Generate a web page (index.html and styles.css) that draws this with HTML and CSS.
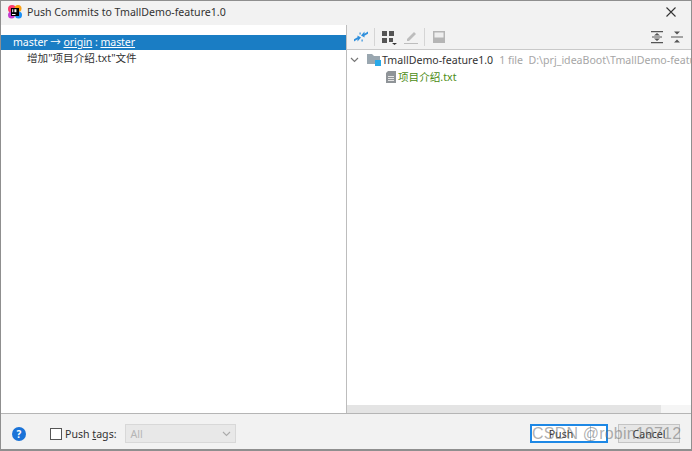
FILE: index.html
```html
<!DOCTYPE html>
<html lang="en">
<head>
  <meta charset="UTF-8" />
  <title>Push Commits to TmallDemo-feature1.0</title>
  <link rel="stylesheet" href="styles.css">
</head>
<body>
  <div class="dialog">
    <header class="titlebar">
      <svg class="app-icon" width="14" height="14" viewBox="0 0 14 14">
        <circle cx="4" cy="4" r="4" fill="#fc3a6c"/>
        <circle cx="10" cy="3.500" r="3.500" fill="#f9a012"/>
        <circle cx="3.500" cy="10" r="3.500" fill="#c33ad0"/>
        <circle cx="10.500" cy="10" r="3.500" fill="#1a90f5"/>
        <rect x="3" y="3" width="8" height="8" fill="#000"/>
        <rect x="4" y="9" width="3.500" height="1" fill="#fff"/>
        <rect x="4.200" y="4.200" width="1" height="3" fill="#fff"/>
        <rect x="6.400" y="4.200" width="2" height="3" fill="#fff"/>
      </svg>
      <span class="title">Push Commits to TmallDemo-feature1.0</span>
      <svg class="close" width="10" height="10" viewBox="0 0 10 10">
        <path d="M.5.500l9 9M9.500.500l-9 9" stroke="#333" stroke-width="1.100" fill="none"/>
      </svg>
    </header>

    <div class="panes">
      <section class="commits">
        <div class="branch-row">master → <u>origin</u> : <u>master</u></div>
        <div class="commit-row">增加"项目介绍.txt"文件</div>
      </section>

      <section class="changes">
        <div class="toolbar">
          <svg class="tool" width="16" height="16" viewBox="0 0 16 16">
            <path d="M8 6.500l3.500-4v2.200L15 2.500v2.300l-3.500 2v1.700z" fill="#2f8fdc"/>
            <path d="M8 8.500l-3.500 4v-2.200L1 12.500v-2.300l3.500-2V6.500z" fill="#2f8fdc"/>
            <path d="M6.500 3.500h1.200v2H6.500zM8.500 10.500h1.200v2H8.500z" fill="#2f8fdc"/>
          </svg>
          <i class="sep"></i>
          <svg class="tool" width="16" height="16" viewBox="0 0 16 16">
            <path d="M1 2h5v5H1zM8 2h5v5H8zM1 9h5v5H1zM8 9h4v4H8z" fill="#555"/>
            <path d="M11 14h5l-2.500 2z" fill="#333"/>
          </svg>
          <svg class="tool" width="16" height="16" viewBox="0 0 16 16">
            <path d="M4 10l7-7 2 2-7 7H4z" fill="#bdbdbd"/>
            <path d="M1 14h14v1H1z" fill="#bdbdbd"/>
          </svg>
          <i class="sep"></i>
          <svg class="tool" width="16" height="16" viewBox="0 0 16 16">
            <path d="M2 2h12v12H2z" fill="#b5b5b5"/>
            <path d="M3.500 3.500h9v5h-9z" fill="#eee"/>
          </svg>
          <span class="spacer"></span>
          <svg class="tool" width="14" height="16" viewBox="0 0 14 16">
            <path d="M1 2h12v1.300H1zM1 13h12v1.300H1zM4 6.500L7 4l3 2.500zM4 9.500L7 12l3-2.500zM2 7.600h10v1H2z" fill="#555"/>
          </svg>
          <svg class="tool" width="14" height="16" viewBox="0 0 14 16">
            <path d="M1 7.400h12v1.200H1zM4 2.500L7 5.500l3-3zM4 13.500L7 10.500l3 3z" fill="#555"/>
          </svg>
        </div>

        <div class="tree">
          <div class="tree-row">
            <svg class="chevron" width="9" height="6" viewBox="0 0 9 6">
              <path d="M1 1l3.500 3.500L8 1" stroke="#777" stroke-width="1.200" fill="none"/>
            </svg>
            <svg class="folder" width="14" height="13" viewBox="0 0 14 13">
              <path d="M0 1h5l2 2h6v8H0z" fill="#9aa7b0"/>
              <rect x="8" y="7" width="6" height="6" fill="#29a9e8"/>
            </svg>
            <span class="module">TmallDemo-feature1.0</span>
            <span class="meta">1 file&nbsp; D:\prj_ideaBoot\TmallDemo-feature1.0</span>
          </div>
          <div class="tree-row file-row">
            <svg class="file" width="10" height="12" viewBox="0 0 10 12">
              <path d="M0 2l2-2h8v12H0z" fill="#8f9498"/>
              <path d="M2 5h6v1H2zM2 7h6v1H2zM2 9h6v1H2z" fill="#e4e4e4"/>
            </svg>
            <span class="file-name">项目介绍.txt</span>
          </div>
        </div>

        <div class="scroll-track"><div class="scroll-thumb"></div></div>
      </section>
    </div>

    <footer class="footer">
      <span class="help">?</span>
      <label class="tags">
        <span class="checkbox"></span>
        <span>Push <u>t</u>ags:</span>
      </label>
      <div class="select">
        <span>All</span>
        <svg width="9" height="6" viewBox="0 0 9 6">
          <path d="M1 1l3.500 3.500L8 1" stroke="#aaa" stroke-width="1.100" fill="none"/>
        </svg>
      </div>
      <span class="spacer"></span>
      <div class="btn btn-push"><span class="btn-main">Push</span><span class="btn-arrow"></span></div>
      <div class="btn btn-cancel">Cancel</div>
    </footer>

    <div class="watermark">CSDN @robin19712</div>
  </div>
</body>
</html>
```

FILE: styles.css
```css
* {
  box-sizing: border-box;
}

html, body {
  margin: 0;
  height: 100%;
}

body {
  font-family: "Noto Sans", "Noto Sans CJK SC", sans-serif;
  font-size: 10.6px;
  color: #222;
  background: white;
}

svg {
  flex-shrink: 0;
}

.dialog {
  position: relative;
  display: flex;
  flex-direction: column;
  height: 451px;
  border: 1px solid #8f8f8f;
  border-bottom-width: 2px;
  overflow: hidden;
}

.titlebar {
  display: flex;
  align-items: center;
  height: 24px;
  padding: 0 15px 2px 7px;
  background: #f2f2f2;
  flex-shrink: 0;
}

.title {
  margin-left: 5px;
  color: #333;
}

.close {
  margin-left: auto;
}

.panes {
  display: flex;
  flex: 1;
  min-height: 0;
}

.commits {
  width: 346px;
  padding-top: 10px;
  border-right: 1px solid #bdbdbd;
  flex-shrink: 0;
}

.branch-row {
  height: 15px;
  line-height: 15px;
  padding-left: 12px;
  background: #1a7dc4;
  color: white;
  letter-spacing: -0.08px;
}

.commit-row {
  height: 17px;
  line-height: 17px;
  padding-left: 26px;
  color: #333;
}

.changes {
  display: flex;
  flex-direction: column;
  flex: 1;
  min-width: 0;
}

.toolbar {
  display: flex;
  align-items: center;
  gap: 6px;
  height: 25px;
  padding: 0 7px 0 6px;
  background: #f2f2f2;
  border-bottom: 1px solid #c9c9c9;
  flex-shrink: 0;
}

.sep {
  width: 1px;
  height: 18px;
  margin-left: -1px;
  background: #d5d5d5;
}

.spacer {
  flex: 1;
}

.tree {
  flex: 1;
  min-height: 0;
  padding-top: 1px;
  overflow: hidden;
}

.tree-row {
  display: flex;
  align-items: center;
  height: 17px;
  padding-left: 3px;
  white-space: nowrap;
}

.chevron {
  margin-right: 8px;
}

.folder {
  margin-right: 1px;
}

.module {
  color: #333;
}

.meta {
  margin-left: 6px;
  color: #a6a6a6;
}

.file-row {
  padding-left: 39px;
}

.file-name {
  margin-left: 2px;
  color: #4c8c14;
}

.scroll-track {
  height: 8px;
  background: #f5f5f5;
  flex-shrink: 0;
}

.scroll-thumb {
  width: 314px;
  height: 100%;
  background: #e4e4e4;
}

.footer {
  display: flex;
  align-items: center;
  height: 36px;
  padding: 4px 11px 0 11px;
  background: #f2f2f2;
  border-top: 1px solid #b5b5b5;
  flex-shrink: 0;
}

.help {
  width: 14px;
  height: 14px;
  border-radius: 50%;
  background: #1a73d8;
  color: white;
  font-size: 10px;
  font-weight: bold;
  line-height: 14px;
  text-align: center;
}

.tags {
  display: flex;
  align-items: center;
  margin-left: 24px;
  color: #333;
}

.checkbox {
  width: 12px;
  height: 12px;
  margin-right: 3px;
  background: white;
  border: 1px solid #555;
}

.select {
  display: flex;
  align-items: center;
  justify-content: space-between;
  width: 111px;
  height: 19px;
  margin-left: 8px;
  padding: 0 4px 0 5px;
  background: #e8e8e8;
  border: 1px solid #d8d8d8;
  color: #b5b5b5;
}

.btn {
  display: flex;
  align-items: center;
  justify-content: center;
  height: 19px;
  color: #333;
}

.btn-push {
  width: 78px;
  border: 2px solid #1e88e5;
  background: white;
}

.btn-main {
  flex: 1;
  text-align: center;
}

.btn-arrow {
  width: 16px;
  height: 100%;
  border-left: 1px solid #b0c8dc;
}

.btn-cancel {
  width: 62px;
  margin-left: 10px;
  background: #e6e6e6;
  border: 1px solid #c4c4c4;
}

.watermark {
  position: absolute;
  left: 531px;
  top: 424px;
  font-family: "Liberation Sans", sans-serif;
  font-size: 16px;
  letter-spacing: 0.2px;
  color: rgba(110, 110, 110, 0.55);
  white-space: nowrap;
}
```
